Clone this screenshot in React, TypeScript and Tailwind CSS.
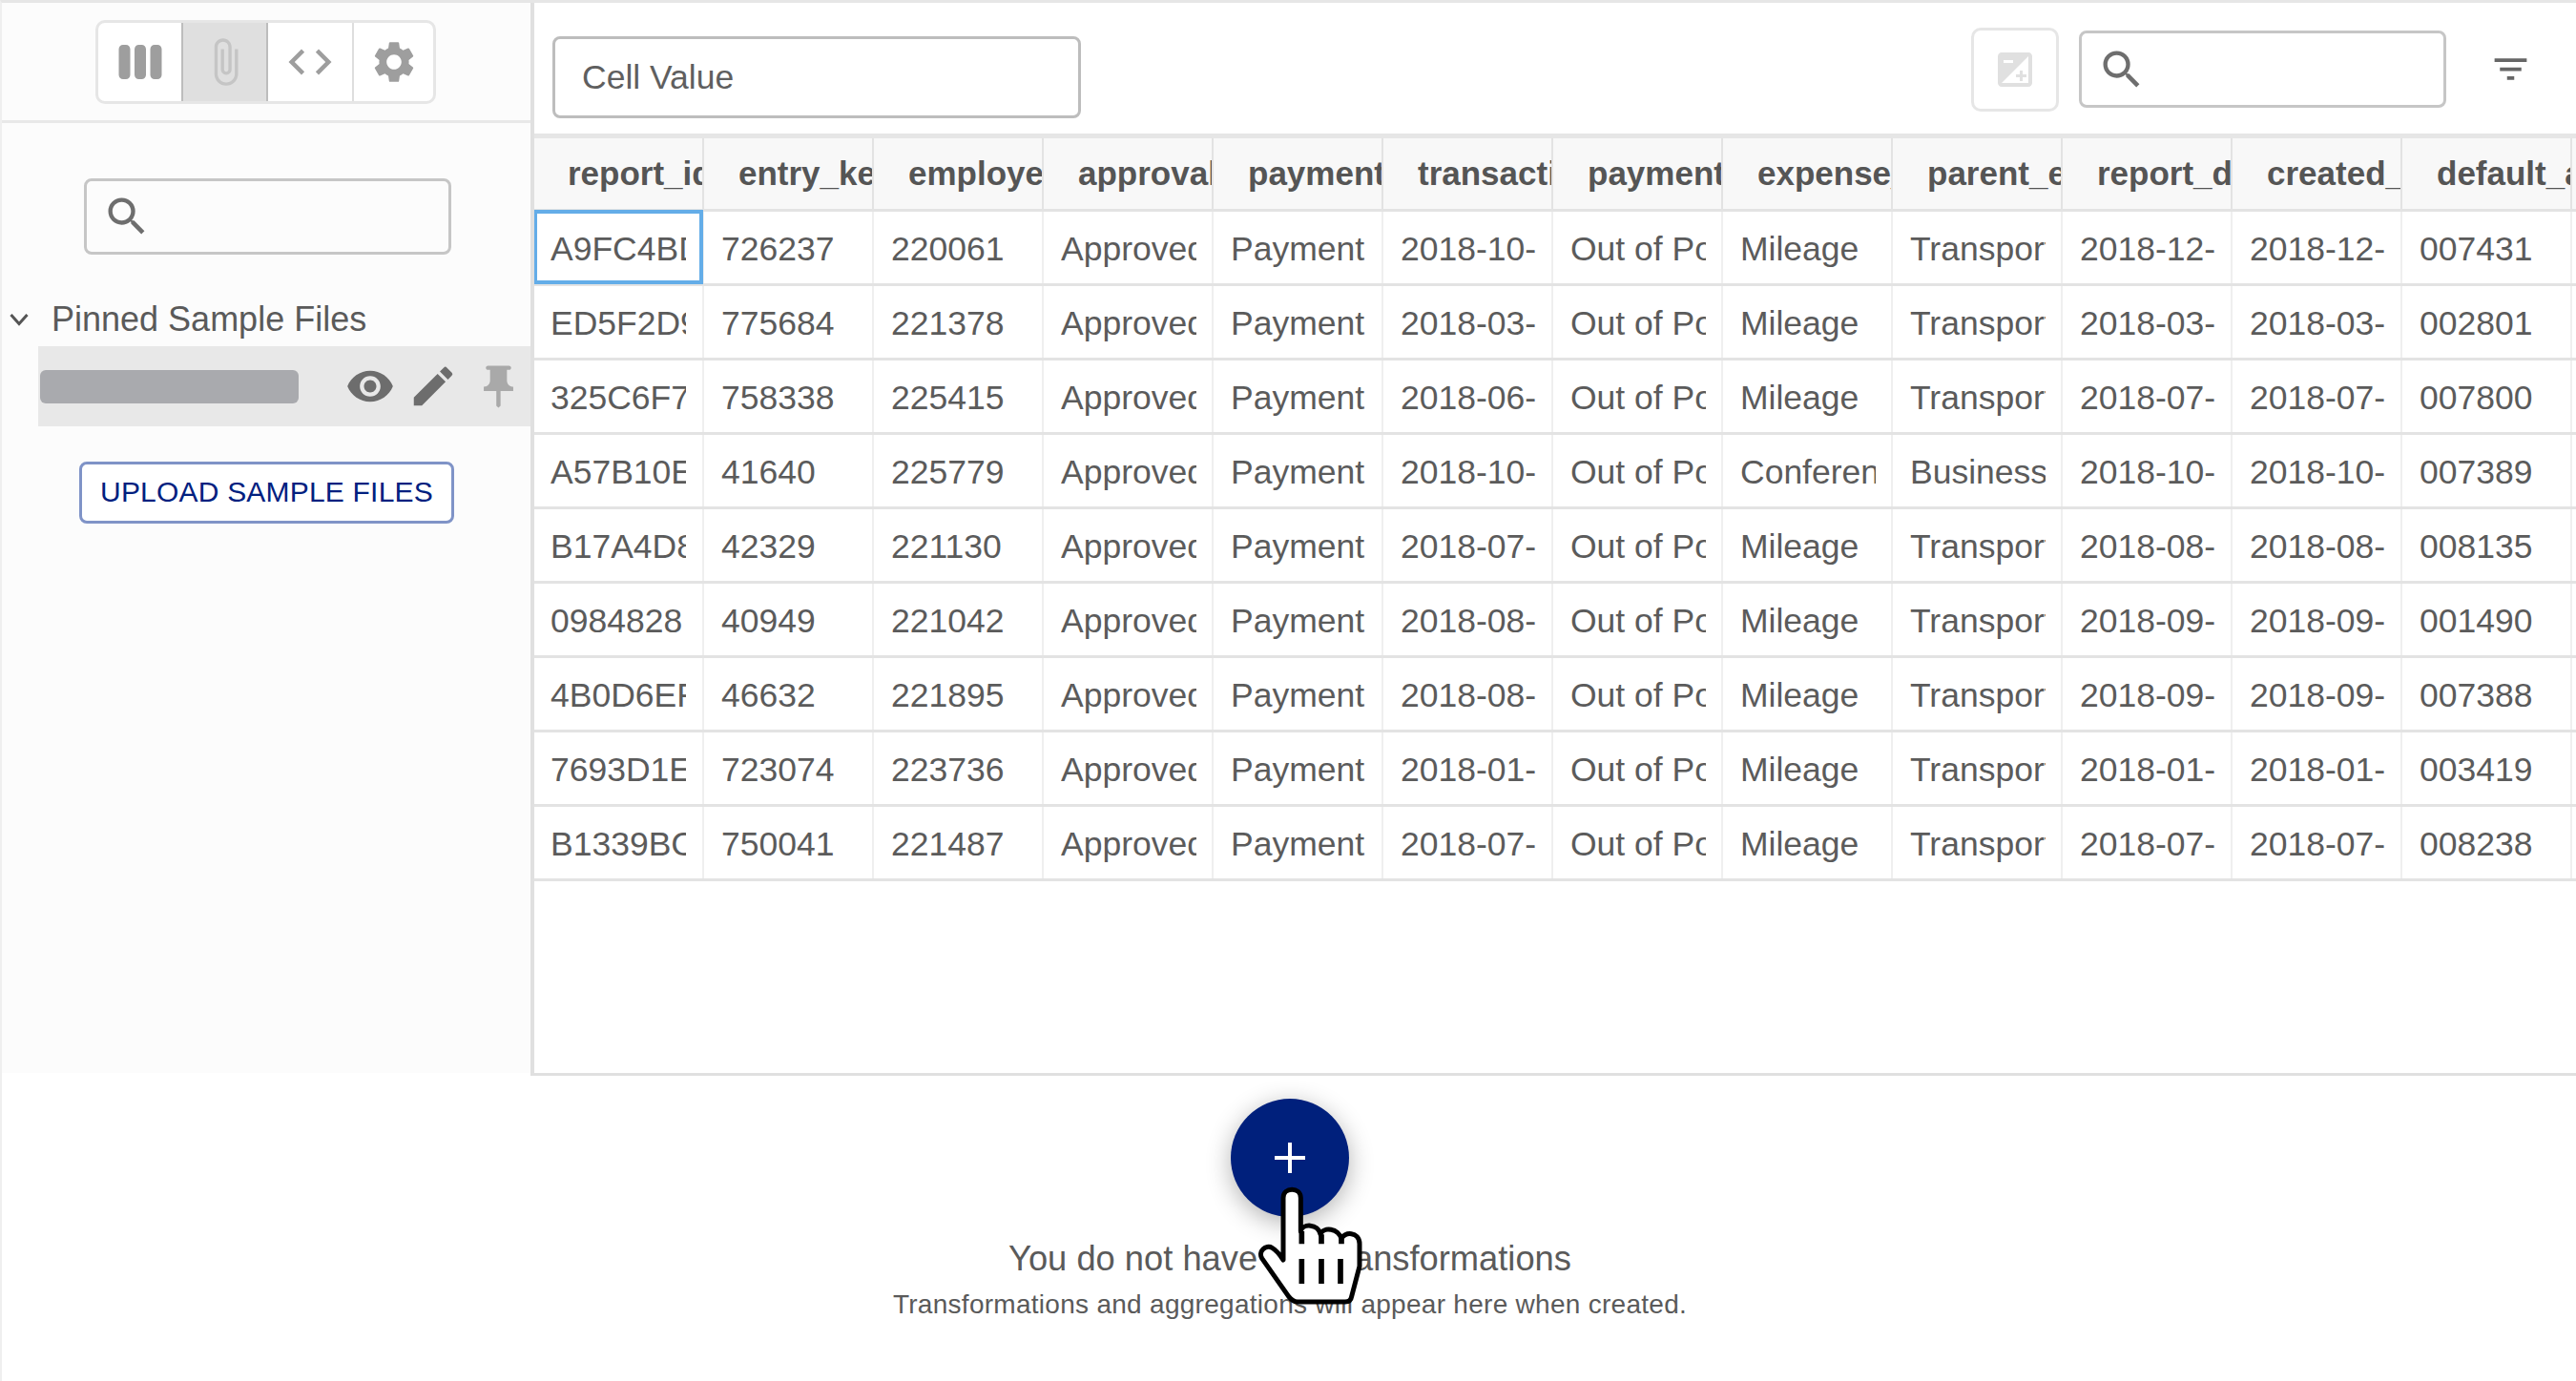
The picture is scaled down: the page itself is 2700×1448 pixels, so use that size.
import { MdAttachFile, MdCode, MdEdit, MdExposure, MdFilterList, MdPushPin, MdSearch, MdSettings, MdViewWeek, MdVisibility } from "react-icons/md";

const COLUMNS = ["report_id", "entry_key", "employee_id", "approval_status", "payment_type", "transaction_date", "payment_method", "expense_type", "parent_expense", "report_date", "created_date", "default_account"];

const ROWS = [
  ["A9FC4BD1E", "726237", "220061", "Approved", "Payment", "2018-10-12", "Out of Pocket", "Mileage", "Transportation", "2018-12-04", "2018-12-04", "007431"],
  ["ED5F2D9A1", "775684", "221378", "Approved", "Payment", "2018-03-21", "Out of Pocket", "Mileage", "Transportation", "2018-03-28", "2018-03-28", "002801"],
  ["325C6F7B0", "758338", "225415", "Approved", "Payment", "2018-06-29", "Out of Pocket", "Mileage", "Transportation", "2018-07-02", "2018-07-02", "007800"],
  ["A57B10EC4", "41640", "225779", "Approved", "Payment", "2018-10-05", "Out of Pocket", "Conference", "Business", "2018-10-09", "2018-10-09", "007389"],
  ["B17A4D8F2", "42329", "221130", "Approved", "Payment", "2018-07-30", "Out of Pocket", "Mileage", "Transportation", "2018-08-01", "2018-08-01", "008135"],
  ["0984828", "40949", "221042", "Approved", "Payment", "2018-08-27", "Out of Pocket", "Mileage", "Transportation", "2018-09-03", "2018-09-03", "001490"],
  ["4B0D6EF37", "46632", "221895", "Approved", "Payment", "2018-08-31", "Out of Pocket", "Mileage", "Transportation", "2018-09-05", "2018-09-05", "007388"],
  ["7693D1E5A", "723074", "223736", "Approved", "Payment", "2018-01-16", "Out of Pocket", "Mileage", "Transportation", "2018-01-22", "2018-01-22", "003419"],
  ["B1339BC06", "750041", "221487", "Approved", "Payment", "2018-07-11", "Out of Pocket", "Mileage", "Transportation", "2018-07-18", "2018-07-18", "008238"],
];

function SearchBox({ className }: { className: string }) {
  return (
    <div className={`flex items-center rounded-[8px] border-[3px] border-[#c6c6c6] ${className}`}>
      <MdSearch className="ml-[16px] text-[#6e6e6e]" size={52} />
    </div>
  );
}

function Sidebar() {
  return (
    <div className="flex w-[558px] shrink-0 flex-col border-r-4 border-[#e0e0e0] bg-[#fcfcfc]">
      <div className="h-[126px] border-b-[3px] border-[#e8e8e8] pl-[98px] pt-[18px]">
        <div className="flex h-[88px] w-[357px] overflow-hidden rounded-[10px] border-[3px] border-[#e6e6e6] bg-white text-[#9e9e9e]">
          <div className="flex w-[87px] items-center justify-center"><MdViewWeek size={54} /></div>
          <div className="flex w-[91px] items-center justify-center border-x-2 border-[#bdbdbd] bg-[#dfdfdf] text-[#c5c5c5]"><MdAttachFile size={54} /></div>
          <div className="flex w-[88px] items-center justify-center"><MdCode size={54} /></div>
          <div className="flex flex-1 items-center justify-center border-l-2 border-[#dedede]"><MdSettings size={52} /></div>
        </div>
      </div>
      <SearchBox className="ml-[86px] mt-[58px] h-[80px] w-[385px] shrink-0" />
      <div className="mt-[40px] flex h-[56px] items-center text-[36px] text-[#5a5a5a]">
        <svg className="ml-[8px] mr-[24px]" width="20" height="14" viewBox="0 0 20 14" fill="none" stroke="#555" strokeWidth="3">
          <polyline points="1.5,2 10,11.5 18.5,2" />
        </svg>
        Pinned Sample Files
      </div>
      <div className="ml-[38px] flex h-[84px] items-center bg-[#e8e8e8]">
        <div className="ml-[2px] h-[35px] w-[271px] rounded-[6px] bg-[#a9aaae]" />
        <MdVisibility className="ml-[49px] text-[#6d6d6d]" size={52} />
        <MdEdit className="ml-[13px] text-[#6d6d6d]" size={54} />
        <MdPushPin className="ml-[15px] text-[#a9a9a9]" size={53} />
      </div>
      <div className="ml-[81px] mt-[37px] flex h-[65px] w-[393px] items-center justify-center rounded-[8px] border-[3px] border-[#7f93c7] bg-white pb-[2px] text-[30px] tracking-[0.2px] text-[#00207f]">
        UPLOAD SAMPLE FILES
      </div>
    </div>
  );
}

function DataTable() {
  return (
    <div className="flex-1 overflow-hidden border-t-[5px] border-[#e6e6e6]">
      <table className="-ml-px w-[2314px] table-fixed border-collapse text-[35.5px] text-[#5b5b5b]">
        <thead>
          <tr className="h-[75px] bg-[#f8f8f8]">
            {COLUMNS.map((c) => (
              <th key={c} className="w-[178px] border-b-[3px] border-r-2 border-[#e3e3e3] p-0 text-left text-[35px] font-bold text-[#555]">
                <div className="overflow-hidden whitespace-nowrap pl-[36px]">{c}</div>
              </th>
            ))}
            <th className="w-[178px] border-b-[3px] border-[#e3e3e3] p-0" />
          </tr>
        </thead>
        <tbody>
          {ROWS.map((row, i) => (
            <tr key={row[0]} className="h-[78px]">
              {row.map((v, j) => (
                <td key={j} className={`border-b-[3px] border-r-2 border-b-[#e3e3e3] border-r-[#efefef] p-0 ${i === 0 && j === 0 ? "outline-4 -outline-offset-4 outline-[#64ade8]" : ""}`}>
                  <div className="ml-[18px] w-[142px] overflow-hidden whitespace-nowrap pt-[6px]">{v}</div>
                </td>
              ))}
              <td className="border-b-[3px] border-[#e3e3e3] p-0" />
            </tr>
          ))}
        </tbody>
      </table>
    </div>
  );
}

function Main() {
  return (
    <div className="flex min-w-0 flex-1 flex-col">
      <div className="flex h-[137px] shrink-0 items-start bg-white">
        <div className="ml-[19px] mt-[35px] flex h-[86px] w-[554px] items-center rounded-[8px] border-[3px] border-[#bdbdbd] pl-[28px] pt-[2px] text-[35.5px] text-[#5f5f5f]">
          Cell Value
        </div>
        <div className="ml-auto mt-[26px] flex h-[88px] w-[92px] items-center justify-center rounded-[10px] border-[3px] border-[#e6e6e6] text-[#e0e0e0]">
          <MdExposure size={48} />
        </div>
        <SearchBox className="ml-[21px] mt-[29px] h-[81px] w-[385px]" />
        <MdFilterList className="ml-[45px] mr-[46px] mt-[47px] text-[#666]" size={45} />
      </div>
      <DataTable />
    </div>
  );
}

export default function App() {
  return (
    <div className="relative h-[1448px] w-[2700px] overflow-hidden border-l-2 border-t-[3px] border-l-[#efefef] border-t-[#e6e6e6] bg-white font-['Liberation_Sans',Arial,sans-serif]">
      <div className="flex h-[1122px]">
        <Sidebar />
        <Main />
      </div>
      <div className="flex flex-col items-center pl-[2px]">
        <div className="h-[3px] w-[2144px] self-end bg-[#e0e0e0]" />
        <div className="mt-[24px] flex h-[124px] w-[124px] items-center justify-center rounded-full bg-[#00207c] shadow-[0_6px_26px_rgba(0,0,0,0.3)]">
          <svg width="32" height="32" viewBox="0 0 32 32" stroke="#fff" strokeWidth="4"><path d="M16 0v32M0 16h32" /></svg>
        </div>
        <div className="mt-[22px] h-[44px] text-[36.3px] leading-[44px] text-[#5a5a5a]">You do not have any transformations</div>
        <div className="mt-[8px] text-[28px] leading-[36px] tracking-[0.28px] text-[#5a5a5a]">Transformations and aggregations will appear here when created.</div>
      </div>
      <svg className="absolute left-[1278px] top-[1138px]" width="240" height="240" viewBox="0 0 720 720">
        <path d="M195 540V345C195 310 250 310 250 345V450C255 425 305 425 312 460C320 435 370 440 378 475C385 450 435 450 435 490V560L410 655C408 668 400 672 390 672H240C228 672 220 665 212 655L128 535C115 515 140 490 160 502C175 510 185 525 195 540Z" fill="#fff" stroke="#000" strokeWidth="15" strokeLinejoin="round" />
        <path d="M253 450V490M315 460V490M378 475V490M253 537V615M315 537V615M375 537V615" stroke="#000" strokeWidth="17" fill="none" />
      </svg>
    </div>
  );
}
